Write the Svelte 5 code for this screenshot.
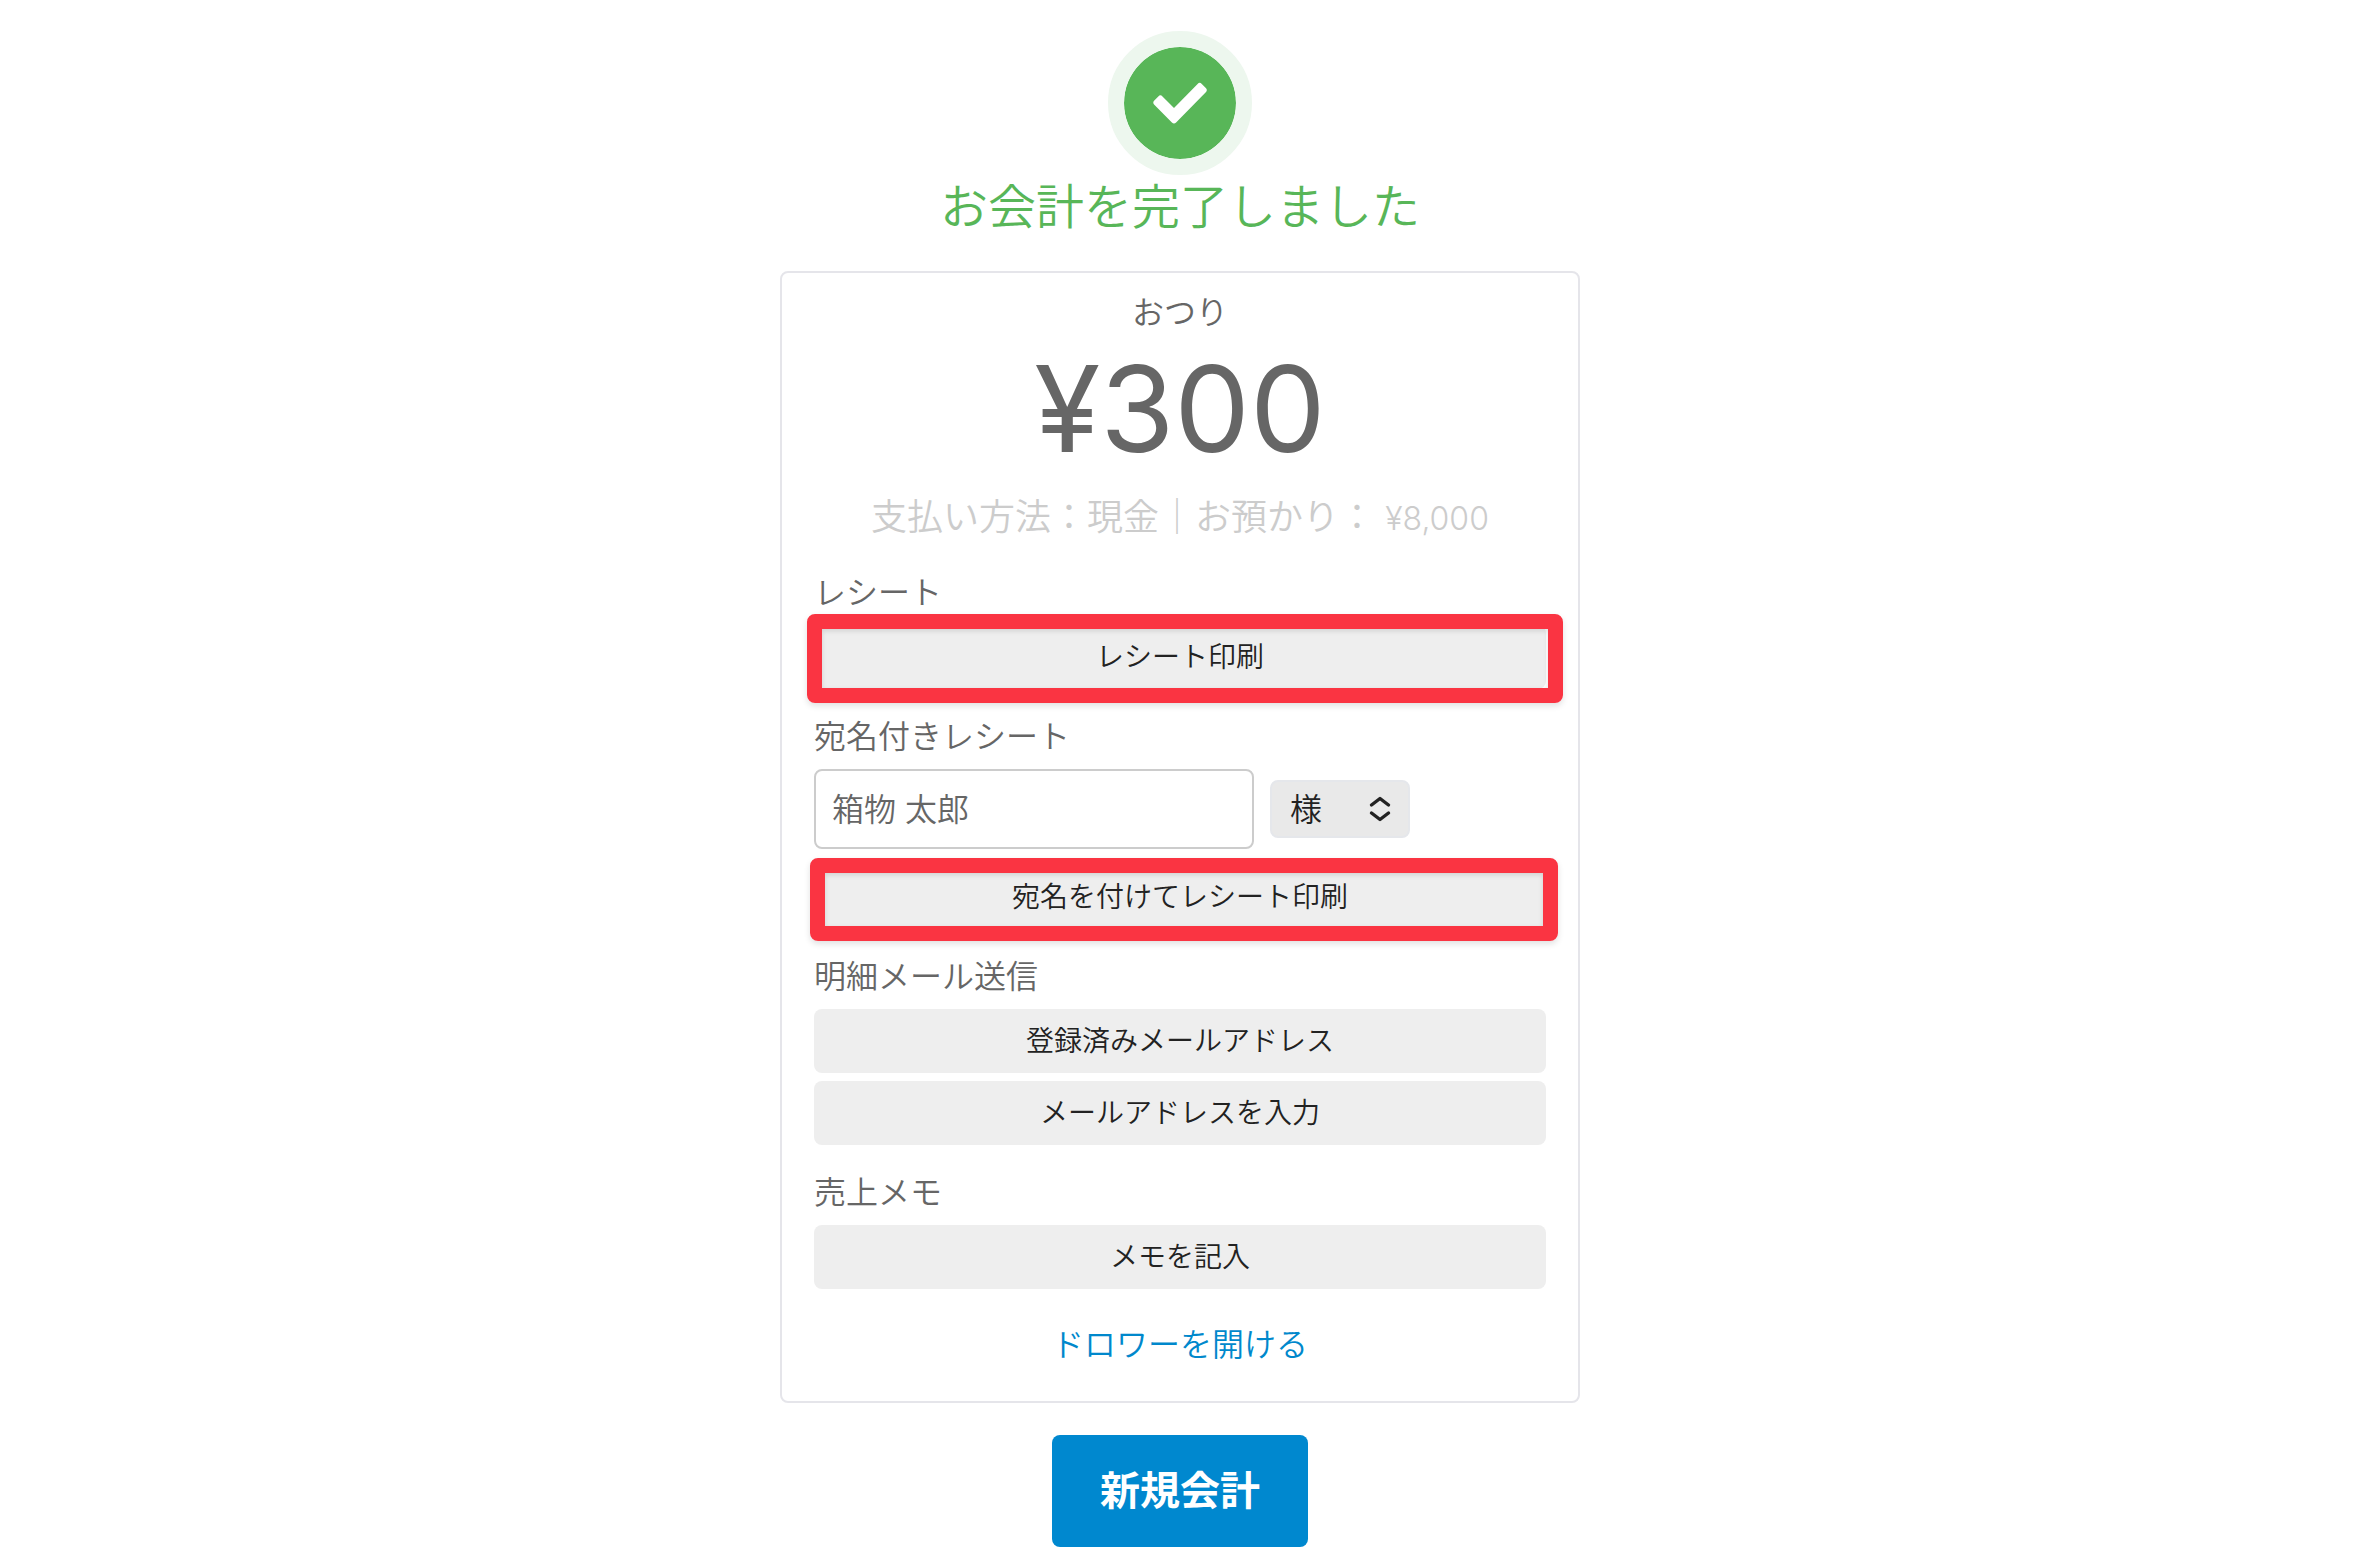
<script lang="ts">
	let recipient = $state('');
	let honorific = $state('様');

	const honorifics = ['様', '御中'];
	const change = '¥300';
	const deposit = '¥8,000';
</script>

<main class="checkout">
	<header class="status">
		<div class="status-icon" aria-hidden="true">
			<svg width="56" height="44" viewBox="0 0 56 44">
				<path
					d="M6.3 15.4a3 3 0 0 1 4.2 0L22 27 45.6 2.9a3 3 0 0 1 4.2 0l4 4.1a3 3 0 0 1 0 4.2L24.1 41.4a3 3 0 0 1-4.2 0L2.3 23.7a3 3 0 0 1 0-4.2z"
					fill="#fff"
				/>
			</svg>
		</div>
		<h1 class="status-title">お会計を完了しました</h1>
	</header>

	<section class="card">
		<div class="summary">
			<p class="summary-label">おつり</p>
			<p class="summary-amount">{change}</p>
			<p class="summary-detail">支払い方法：現金｜お預かり： <span class="deposit">{deposit}</span></p>
		</div>

		<div class="group">
			<h2 class="group-label">レシート</h2>
			<button type="button" class="btn marked marked-receipt">レシート印刷</button>
		</div>

		<div class="group">
			<label class="group-label" for="recipient">宛名付きレシート</label>
			<div class="recipient-row">
				<input id="recipient" type="text" placeholder="箱物 太郎" bind:value={recipient} />
				<div class="select-wrap">
					<select aria-label="敬称" bind:value={honorific}>
						{#each honorifics as item}
							<option value={item}>{item}</option>
						{/each}
					</select>
					<svg class="select-icon" width="24" height="28" viewBox="0 0 24 28" aria-hidden="true">
						<path
							d="M3.5 10 12 3.5 20.5 10M3.5 18 12 24.5 20.5 18"
							fill="none"
							stroke="#222"
							stroke-width="3.4"
							stroke-linecap="round"
							stroke-linejoin="round"
						/>
					</svg>
				</div>
			</div>
			<button type="button" class="btn marked marked-named">宛名を付けてレシート印刷</button>
		</div>

		<div class="group">
			<h2 class="group-label">明細メール送信</h2>
			<div class="btn-stack">
				<button type="button" class="btn">登録済みメールアドレス</button>
				<button type="button" class="btn">メールアドレスを入力</button>
			</div>
		</div>

		<div class="group">
			<h2 class="group-label">売上メモ</h2>
			<button type="button" class="btn">メモを記入</button>
		</div>

		<a class="drawer-link" href="#drawer">ドロワーを開ける</a>
	</section>

	<button type="button" class="btn-primary">新規会計</button>
</main>

<style>
	:global(body) {
		background: #fff;
	}

	.checkout {
		display: flex;
		flex-direction: column;
		align-items: center;
		padding: 31px 16px 8px;
		font-family: Inter, 'Noto Sans CJK JP', sans-serif;
		font-weight: 350;
		color: #666;
	}

	h1,
	h2,
	p {
		margin: 0;
		font-weight: inherit;
	}

	button,
	input,
	select {
		font: inherit;
		box-sizing: border-box;
		margin: 0;
	}

	.status {
		display: flex;
		flex-direction: column;
		align-items: center;
		margin-bottom: 32px;
	}

	.status-icon {
		display: flex;
		align-items: center;
		justify-content: center;
		width: 112px;
		height: 112px;
		border: 16px solid #edf7ee;
		border-radius: 50%;
		background: #58b658;
		background-clip: padding-box;
	}

	.status-title {
		font-size: 48px;
		line-height: 64px;
		color: #58b658;
	}

	/* Card */
	.card {
		box-sizing: border-box;
		width: 100%;
		max-width: 800px;
		padding: 16px 32px 32px;
		border: 2px solid #e5e5ea;
		border-radius: 8px;
		display: flex;
		flex-direction: column;
		gap: 24px;
	}

	.summary {
		text-align: center;
	}

	.summary-label {
		font-size: 32px;
		line-height: 48px;
	}

	.summary-amount {
		font-size: 120px;
		font-weight: 400;
		line-height: 144px;
	}

	.summary-detail {
		margin-top: 8px;
		font-size: 36px;
		line-height: 56px;
		color: #ccc;
	}

	.deposit {
		font-size: 32px;
		line-height: 32px;
	}

	.group-label {
		display: block;
		margin-bottom: 8px;
		font-size: 32px;
		line-height: 48px;
	}

	.btn-stack {
		display: flex;
		flex-direction: column;
		gap: 8px;
	}

	.btn {
		display: block;
		position: relative;
		width: 100%;
		height: 64px;
		padding: 0 16px 4px;
		border: none;
		border-radius: 8px;
		background: #eee;
		font-size: 28px;
		color: #222;
		cursor: pointer;
	}

	/* Red frame drawn over the print buttons */
	.marked::after {
		content: '';
		position: absolute;
		border: 15px solid #fa3442;
		border-radius: 8px;
		box-shadow:
			0 3px 6px rgba(0, 0, 0, 0.12),
			inset 0 2px 5px rgba(0, 0, 0, 0.12);
	}

	.marked-receipt::after {
		inset: -11px -17px -14px -7px;
	}

	.marked-named::after {
		inset: -7px -12px -12px -4px;
	}

	.recipient-row {
		display: flex;
		align-items: center;
		gap: 16px;
		margin-bottom: 16px;
	}

	input {
		width: 440px;
		min-width: 0;
		height: 80px;
		padding: 0 16px;
		border: 2px solid #ccc;
		border-radius: 8px;
		background: #fff;
		font-size: 32px;
		color: #222;
	}

	input::placeholder {
		color: #666;
		opacity: 1;
	}

	.select-wrap {
		position: relative;
	}

	select {
		display: block;
		appearance: none;
		width: 140px;
		height: 58px;
		padding: 0 48px 0 18px;
		border: 2px solid #e5e7eb;
		border-radius: 8px;
		background: #e9e9e9;
		font-size: 32px;
		color: #222;
	}

	.select-icon {
		position: absolute;
		top: 15px;
		right: 18px;
		pointer-events: none;
	}

	.drawer-link {
		align-self: center;
		margin-top: 8px;
		font-size: 32px;
		line-height: 48px;
		color: #0088cc;
		text-decoration: none;
	}

	.btn-primary {
		width: 256px;
		height: 112px;
		margin-top: 32px;
		padding: 0 16px 6px;
		border: none;
		border-radius: 8px;
		background: #0088cf;
		font-size: 40px;
		font-weight: 700;
		color: #fff;
		cursor: pointer;
	}
</style>
